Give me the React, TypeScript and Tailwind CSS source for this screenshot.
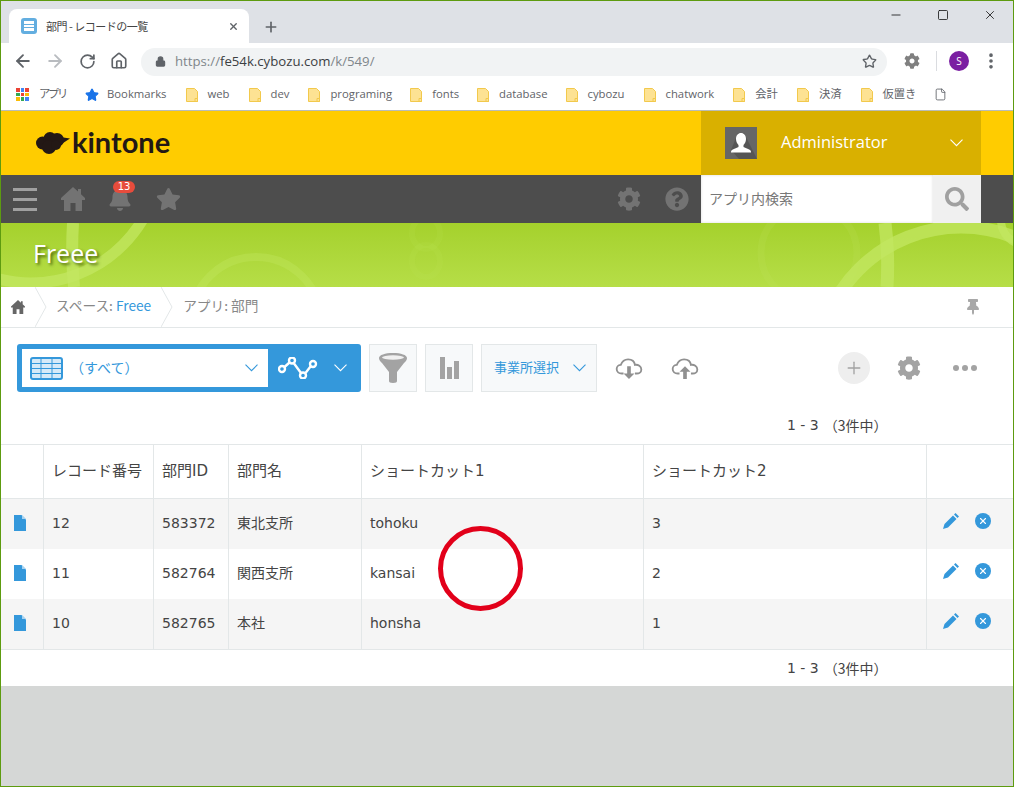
import { ArrowLeft, ArrowRight, RotateCw, Home, Star, Plus, X, Minus, Square, MoreVertical, Lock, File } from "lucide-react";
import { FaBell, FaStar, FaCog, FaQuestionCircle, FaThumbtack, FaSearch } from "react-icons/fa";

const jp = "font-['Noto_Sans_CJK_JP','Noto_Sans',sans-serif]";
const ui = "font-['Open_Sans','Noto_Sans_CJK_JP',sans-serif]";
const body = "font-['DejaVu_Sans','Noto_Sans_CJK_JP',sans-serif]";

const bookmarks = [
  { label: "web", ml: "ml-[19px]" },
  { label: "dev", ml: "ml-[19px]" },
  { label: "programing", ml: "ml-[19px]" },
  { label: "fonts", ml: "ml-[18px]" },
  { label: "database", ml: "ml-[18px]" },
  { label: "cybozu", ml: "ml-[18px]" },
  { label: "chatwork", ml: "ml-[19px]" },
  { label: "会計", ml: "ml-[19px]" },
  { label: "決済", ml: "ml-[19px]" },
  { label: "仮置き", ml: "ml-[19px]" },
];

const records = [
  { no: "12", id: "583372", name: "東北支所", s1: "tohoku", s2: "3" },
  { no: "11", id: "582764", name: "関西支所", s1: "kansai", s2: "2" },
  { no: "10", id: "582765", name: "本社", s1: "honsha", s2: "1" },
];

const gridCols = "grid grid-cols-[43px_110px_75px_133px_282px_283px_86px]";

const Chevron = ({ className }: { className?: string }) => (
  <svg width="13" height="8" viewBox="0 0 13 8" fill="none" stroke="currentColor" strokeWidth="1.1" className={className}>
    <path d="M.5.7l6 6 6-6" />
  </svg>
);

const HomeGlyph = ({ className }: { className?: string }) => (
  <svg viewBox="0 0 24 24" fill="currentColor" className={className}>
    <path d="M12 0L0 11v2h3v11h6.500v-8h5v8H21V13h3v-2l-4-3.700V2h-3v2.600z" />
  </svg>
);

const FolderIcon = () => (
  <svg width="12" height="14" viewBox="0 0 12 14" className="shrink-0">
    <path d="M.5.5h8l3 3v10H.5z" fill="#fde293" stroke="#f2c94c" />
    <path d="M9 10.5h2.5v3H9z" fill="#fde293" stroke="#f2c94c" />
  </svg>
);

const AppsIcon = () => (
  <div className="grid grid-cols-3 gap-[1px] w-[13px] h-[13px] shrink-0 ml-[1px]">
    {["#ea4335", "#4285f4", "#ea4335", "#34a853", "#ea4335", "#fbbc05", "#fbbc05", "#34a853", "#4285f4"].map((c, i) => (
      <span key={i} className="w-[3.6px] h-[3.6px]" style={{ backgroundColor: c }} />
    ))}
  </div>
);

const BrowserChrome = () => (
  <>
    {/* tab strip */}
    <div className="h-[42px] bg-[#dee1e6] flex items-end pl-2 shrink-0">
      <div className="w-[240px] h-[34px] bg-white rounded-t-[8px] flex items-center pl-3 pr-[10px]">
        <div className="w-4 h-4 rounded-[3px] bg-[#63aee0] flex flex-col gap-[1px] items-center justify-center">
          <span className="w-[10px] h-[2.5px] bg-white" />
          <span className="w-[10px] h-[2.5px] bg-white" />
          <span className="w-[10px] h-[2.5px] bg-white" />
        </div>
        <span className={`ml-[9px] text-[11px] tracking-[-0.5px] text-[#444] ${jp}`}>部門 - レコードの一覧</span>
        <X className="ml-auto w-[11px] h-[11px] text-[#5f6368]" strokeWidth={3} />
      </div>
      <Plus className="ml-[14px] mb-[8px] w-[16px] h-[16px] text-[#5f6368]" strokeWidth={2.5} />
      <div className="ml-auto self-start flex items-center gap-[34px] pt-[7px] pr-[16px] text-[#111]">
        <Minus className="w-[14px] h-[14px]" strokeWidth={1.4} />
        <Square className="w-[12px] h-[12px]" strokeWidth={1.6} />
        <X className="w-[14px] h-[14px]" strokeWidth={1.4} />
      </div>
    </div>
    {/* address bar */}
    <div className="h-[36px] bg-white flex items-center pl-[12px] shrink-0">
      <ArrowLeft className="w-[20px] h-[20px] text-[#5f6368]" strokeWidth={2.2} />
      <ArrowRight className="ml-[12px] w-[20px] h-[20px] text-[#b9bcc0]" strokeWidth={2.2} />
      <RotateCw className="ml-[14px] w-[17px] h-[17px] text-[#5f6368]" strokeWidth={2.4} />
      <Home className="ml-[14px] w-[18px] h-[18px] text-[#5f6368]" strokeWidth={2.2} />
      <div className="ml-[13px] w-[746px] h-[28px] mt-[1px] rounded-full bg-[#f1f3f4] flex items-center pl-[14px] pr-[10px]">
        <Lock className="w-[11px] h-[11px] text-[#5f6368] fill-[#5f6368]" strokeWidth={2.5} />
        <span className={`ml-[9px] text-[13.2px] text-[#80868b] ${ui}`}>
          https://<span className="text-[#3c4043]">fe54k.cybozu.com</span>/k/549/
        </span>
        <Star className="ml-auto w-[15px] h-[15px] text-[#5f6368]" strokeWidth={2.2} />
      </div>
      <FaCog className="ml-[17px] w-[16px] h-[16px] text-[#808080]" />
      <span className="ml-[16px] w-px h-[20px] bg-[#dadce0]" />
      <div className={`ml-[12px] w-[20px] h-[20px] rounded-full bg-[#7b1fa2] text-white text-[10px] flex items-center justify-center ${ui}`}>S</div>
      <MoreVertical className="ml-[12px] w-[20px] h-[20px] text-[#5f6368]" strokeWidth={2.4} />
    </div>
    {/* bookmarks */}
    <div className={`h-[31px] bg-white flex items-center pl-[14px] text-[11.3px] text-[#5f6368] border-b border-b-[#b9bcb9] box-content shrink-0 ${ui}`}>
      <AppsIcon />
      <span className="ml-[10px] tracking-[-2.300px]">アプリ</span>
      <Star className="ml-[19px] w-[14px] h-[14px] text-[#1a73e8] fill-[#1a73e8]" />
      <span className="ml-[8px]">Bookmarks</span>
      {bookmarks.map((b) => (
        <div key={b.label} className={`flex items-center gap-[10px] ${b.ml}`}>
          <FolderIcon />
          <span>{b.label}</span>
        </div>
      ))}
      <File className="ml-[18px] w-[13px] h-[15px] text-[#5f6368]" strokeWidth={1.6} />
    </div>
  </>
);

const KintoneHeader = () => (
  <>
    <div className="h-[64px] bg-[#ffcc00] flex shrink-0">
      <div className="flex items-center pl-[35px] w-[700px]">
        <svg width="34" height="23" viewBox="0 0 34 23" fill="#231815">
          <circle cx="6.500" cy="11" r="6.500" />
          <circle cx="14" cy="6.500" r="6.500" />
          <circle cx="21" cy="8" r="7" />
          <circle cx="13" cy="15" r="7" />
          <circle cx="20" cy="13" r="5" />
          <path d="M24 5l10 1.500L24 13z" />
        </svg>
        <span className="ml-[2px] pb-[3px] text-[29px] leading-none font-bold text-[#231815] font-['Lato',sans-serif]">kintone</span>
      </div>
      <div className="w-[280px] bg-[#d9b000] flex items-center pl-[24px] pr-[18px]">
        <div className="w-[32px] h-[32px] bg-[#666] overflow-hidden">
          <svg viewBox="0 0 32 32" className="w-full h-full">
            <path fill="#555" d="M32 32H14L6 23 13 6l6 0z" />
            <path fill="#fff" d="M16 6c3 0 5 2.500 5 6 0 3-1.500 5-2.500 6v2c2 1 5 2 6.500 3 .8.600 1 1.500 1 2.500H6c0-1 .2-2 1-2.500 1.500-1 4.500-2 6.500-3v-2C12.500 17 11 15 11 12c0-3.500 2-6 5-6z" />
          </svg>
        </div>
        <span className={`ml-[24px] pb-[2px] text-[16.500px] text-white ${ui}`}>Administrator</span>
        <Chevron className="ml-auto text-white" />
      </div>
    </div>
    <div className="h-[48px] bg-[#4d4d4d] flex items-center shrink-0">
      <div className="ml-[12px] w-[24px] flex flex-col gap-[7px]">
        <span className="h-[3px] bg-[#a0a0a0]" />
        <span className="h-[3px] bg-[#a0a0a0]" />
        <span className="h-[3px] bg-[#a0a0a0]" />
      </div>
      <HomeGlyph className="ml-[24px] w-[24px] h-[24px] text-[#737373]" />
      <div className="relative ml-[23px]">
        <FaBell className="w-[24px] h-[24px] text-[#737373]" />
        <span className={`absolute -top-[6px] left-[5px] w-[22px] h-[12px] rounded-full bg-[#e74c3c] text-white text-[10px] leading-[12px] text-center ${body}`}>13</span>
      </div>
      <FaStar className="ml-[24px] w-[25px] h-[24px] text-[#737373]" />
      <FaCog className="ml-[436px] w-[24px] h-[24px] text-[#737373]" />
      <FaQuestionCircle className="ml-[24px] w-[24px] h-[24px] text-[#737373]" />
      <div className="ml-[12px] w-[232px] h-[48px] bg-white flex items-center pl-[8px] shadow-[inset_0_0_3px_rgba(0,0,0,0.15)]">
        <span className={`pb-[2px] text-[14px] text-[#777] ${jp}`}>アプリ内検索</span>
      </div>
      <div className="w-[48px] h-[48px] bg-[#f0f0f0] flex items-center justify-center">
        <FaSearch className="w-[24px] h-[24px] text-[#a0a0a0]" />
      </div>
    </div>
    <div className="relative h-[64px] bg-gradient-to-b from-[#a5d12c] to-[#b6de47] flex items-center overflow-hidden shrink-0">
      <svg className="absolute inset-0" width="1012" height="64" viewBox="0 0 1012 64" fill="none" stroke="#c3e762" strokeOpacity="0.75">
        <circle cx="30" cy="-70" r="130" strokeWidth="11" />
        <path d="M72 0 Q70 32 73 64" strokeWidth="12" />
        <circle cx="255" cy="99" r="65" strokeWidth="8" strokeOpacity="0.35" />
        <ellipse cx="425" cy="10" rx="14" ry="16" strokeWidth="6" strokeOpacity="0.1" />
        <ellipse cx="425" cy="38" rx="14" ry="16" strokeWidth="6" strokeOpacity="0.1" />
        <circle cx="808" cy="30" r="48" strokeWidth="7" strokeOpacity="0.15" />
        <circle cx="960" cy="148" r="144" strokeWidth="13" />
        <path d="M884 0 Q888 32 886 64" strokeWidth="13" />
        <circle cx="1025" cy="-3" r="25" strokeWidth="8" />
      </svg>
      <span className={`relative ml-[32px] pb-[3px] text-[25px] text-white [text-shadow:2px_2px_3px_rgba(50,70,0,0.8)] ${ui}`}>Freee</span>
    </div>
  </>
);

const Crumb = () => (
  <svg width="12" height="40" viewBox="0 0 12 40" fill="none" stroke="#e3e7e8" className="shrink-0">
    <path d="M0 0l11 20L0 40" />
  </svg>
);

const Breadcrumb = () => (
  <div className={`h-[41px] bg-white border-b border-b-[#e3e7e8] flex items-center text-[13.7px] text-[#888] shrink-0 ${jp}`}>
    <HomeGlyph className="ml-[10px] w-[14px] h-[14px] text-[#666]" />
    <span className="ml-[10px]"><Crumb /></span>
    <span className="ml-[9px] pb-[3px]">スペース: <span className="text-[#3498db]">Freee</span></span>
    <span className="ml-[10px]"><Crumb /></span>
    <span className="ml-[10px] pb-[3px]">アプリ: 部門</span>
    <FaThumbtack className="ml-auto mr-[33px] w-[14px] h-[16px] text-[#a8a8a8]" />
  </div>
);

const CloudIcon = ({ up }: { up?: boolean }) => (
  <svg width="28" height="21" viewBox="0 0 30 23" fill="none" stroke="#909090" strokeWidth="2">
    <path d="M9 17H7c-3 0-5.500-2-5.500-5s2.500-4.500 4.500-4.500C7.500 3.500 11 1.500 14 1.500c4 0 7 2.500 7.500 6 3.500-.5 7 1.500 7 5 0 3-2.500 4.500-5 4.500h-2" />
    {up ? (
      <path fill="#909090" stroke="none" d="M15 9l6 6h-4v8h-4v-8H9z" />
    ) : (
      <path fill="#909090" stroke="none" d="M13 9h4v8h4l-6 6-6-6h4z" />
    )}
  </svg>
);

const ViewToolbar = () => (
  <div className="h-[65px] bg-white flex items-start pt-[16px] pl-[16px] shrink-0">
    <div className="w-[344px] h-[48px] bg-[#3498db] rounded-[3px] flex items-center pl-[5px]">
      <div className="w-[246px] h-[38px] bg-white flex items-center pl-[8px] pr-[10px]">
        <svg width="33" height="23" viewBox="0 0 33 23">
          <rect x="1" y="1" width="31" height="21" rx="2" fill="#d6eaf8" stroke="#3498db" strokeWidth="2" />
          <path stroke="#3498db" d="M1 6.500h31M1 11.500h31M1 16.500h31M11 1v21M22 1v21" fill="none" />
        </svg>
        <span className={`ml-[7px] pb-[2px] text-[14px] text-[#3498db] ${jp}`}>（すべて）</span>
        <Chevron className="ml-auto text-[#3498db]" />
      </div>
      <svg width="40" height="22" viewBox="0 0 40 22" fill="none" stroke="#fff" strokeWidth="2.4" className="ml-[10px]">
        <path d="M6.500 10L11.500 5.500M16 6.500L23 16M27.500 16L32.500 9.500" />
        <circle cx="4" cy="12" r="3" />
        <circle cx="14" cy="3.500" r="3" />
        <circle cx="25" cy="18.500" r="3" />
        <circle cx="35" cy="7" r="3" />
      </svg>
      <Chevron className="ml-[16px] text-white" />
    </div>
    <button className="ml-[8px] w-[48px] h-[48px] bg-[#f7f9fa] border border-[#e3e7e8] flex items-center justify-center">
      <svg width="30" height="30" viewBox="0 0 30 30">
        <path fill="#a3a3a3" d="M1 5c0-3 6-5 14-5s14 2 14 5c0 2-1 3-3 5l-7 9v9c0 1-1 2-4 2s-4-1-4-2v-9L4 10C2 8 1 7 1 5z" />
        <ellipse cx="15" cy="4.500" rx="11" ry="2.200" fill="#f0f0f0" />
      </svg>
    </button>
    <button className="ml-[8px] w-[48px] h-[48px] bg-[#f7f9fa] border border-[#e3e7e8] flex items-end justify-center gap-[2px] pb-[12px]">
      <span className="w-[5px] h-[22px] bg-[#a3a3a3]" />
      <span className="w-[5px] h-[12px] bg-[#a3a3a3]" />
      <span className="w-[5px] h-[18px] bg-[#a3a3a3]" />
    </button>
    <button className={`ml-[8px] w-[116px] h-[48px] bg-[#f7f9fa] border border-[#e3e7e8] flex items-center pl-[12px] pr-[10px] text-[13px] text-[#3498db] ${jp}`}>
      <span className="pb-[2px]">事業所選択</span>
      <Chevron className="ml-auto" />
    </button>
    <div className="ml-[18px] mt-[14px]"><CloudIcon /></div>
    <div className="ml-[28px] mt-[14px]"><CloudIcon up /></div>
    <div className="ml-[139px] mt-[8px] w-[32px] h-[32px] rounded-full bg-[#eeeeee] flex items-center justify-center">
      <Plus className="w-[20px] h-[20px] text-[#a3a3a3]" strokeWidth={1.6} />
    </div>
    <FaCog className="ml-[27px] mt-[12px] w-[24px] h-[24px] text-[#a3a3a3]" />
    <div className="ml-[32px] mt-[21px] flex gap-[3px]">
      <span className="w-[6px] h-[6px] rounded-full bg-[#a3a3a3]" />
      <span className="w-[6px] h-[6px] rounded-full bg-[#a3a3a3]" />
      <span className="w-[6px] h-[6px] rounded-full bg-[#a3a3a3]" />
    </div>
  </div>
);

const Pager = ({ box }: { box: string }) => (
  <div className={`${box} bg-white flex items-center pl-[786px] text-[14px] text-[#444] shrink-0 box-border ${body}`}>
    <span>1 - 3</span>
    <span className={`ml-[5px] ${jp}`}>（3件中）</span>
  </div>
);

const PencilIcon = () => (
  <svg width="16" height="16" viewBox="0 0 16 16" fill="#3498db">
    <path d="M0 16l1.500-5L10 2.500 13.500 6 5 14.500z" />
    <path d="M11 1.500L12.500 0 16 3.500 14.500 5z" />
  </svg>
);

const RecordTable = () => (
  <div className={`bg-white text-[14px] text-[#444] ${body}`}>
    <div className={`${gridCols} h-[55px] border-y border-[#e3e7e8] text-[15px]`}>
      {["", "レコード番号", "部門ID", "部門名", "ショートカット1", "ショートカット2", ""].map((h, i) => (
        <div key={i} className="flex items-center pl-[8px] border-r border-[#e3e7e8] last:border-r-0">{h}</div>
      ))}
    </div>
    {records.map((r, i) => (
      <div key={r.no} className={`${gridCols} h-[50px] ${i % 2 === 0 ? "bg-[#f5f5f5]" : "bg-white"}`}>
        <div className="flex items-center pl-[13px] pb-[2px] border-r border-[#e3e7e8]">
          <svg width="12" height="16" viewBox="0 0 12 16">
            <path fill="#3498db" d="M0 0h7.500L12 4.500V16H0z" />
            <path fill="#a9d3f0" d="M8 0l4 4H8z" />
          </svg>
        </div>
        <div className="flex items-center pl-[8px] pb-[2px] border-r border-[#e3e7e8]">{r.no}</div>
        <div className="flex items-center pl-[8px] pb-[2px] border-r border-[#e3e7e8]">{r.id}</div>
        <div className="flex items-center pl-[8px] pb-[2px] border-r border-[#e3e7e8]">{r.name}</div>
        <div className="flex items-center pl-[8px] pb-[2px] border-r border-[#e3e7e8]">{r.s1}</div>
        <div className="flex items-center pl-[8px] pb-[2px] border-r border-[#e3e7e8]">{r.s2}</div>
        <div className="flex items-start pt-[14px] pl-[16px]">
          <PencilIcon />
          <div className="ml-[16px] w-[16px] h-[16px] rounded-full bg-[#3498db] flex items-center justify-center">
            <X className="w-[10px] h-[10px] text-white" strokeWidth={2.6} />
          </div>
        </div>
      </div>
    ))}
    <div className="border-t border-[#e3e7e8]" />
  </div>
);

export default function App() {
  return (
    <div className="relative w-[1014px] h-[787px] overflow-hidden border border-[#5d9b0f] bg-[#d5d7d6] flex flex-col box-border">
      <BrowserChrome />
      <KintoneHeader />
      <Breadcrumb />
      <ViewToolbar />
      <Pager box="h-[51px] pt-[13px]" />
      <RecordTable />
      <Pager box="h-[36px]" />
      {/* annotation circle drawn on top of the screenshot */}
      <div className="absolute left-[437px] top-[525px] w-[85px] h-[85px] rounded-full border-[5px] border-[#e2001a]" />
    </div>
  );
}
